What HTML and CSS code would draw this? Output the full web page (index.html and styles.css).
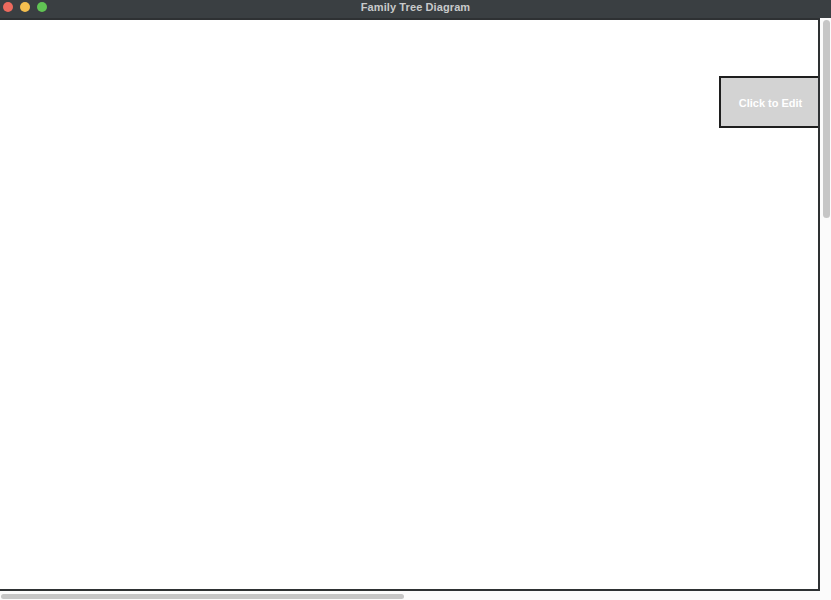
FILE: index.html
```html
<!DOCTYPE html>
<html>
<head>
<meta charset="utf-8">
<title>Family Tree Diagram</title>
<link rel="stylesheet" href="styles.css">
</head>
<body>
<div class="window">
  <div class="titlebar">
    <div class="lights">
      <span class="light red"></span>
      <span class="light yellow"></span>
      <span class="light green"></span>
    </div>
    <div class="title">Family Tree Diagram</div>
  </div>
  <div class="stage">
    <div class="row">
      <div class="canvas">
        <div class="node">Click to Edit</div>
      </div>
      <div class="vscroll"><div class="vthumb"></div></div>
    </div>
    <div class="hscroll"><div class="hthumb"></div></div>
  </div>
</div>
</body>
</html>
```

FILE: styles.css
```css
html, body {
  margin: 0;
  padding: 0;
  background: #ffffff;
  font-family: "Liberation Sans", Arial, sans-serif;
}
.window {
  width: 831px;
  height: 600px;
  display: flex;
  flex-direction: column;
  overflow: hidden;
}
.titlebar {
  height: 18px;
  flex: none;
  background: #3a3f42;
  position: relative;
  display: flex;
  align-items: center;
  justify-content: center;
}
.lights {
  position: absolute;
  left: 3px;
  top: 2px;
  display: flex;
  gap: 7px;
}
.light {
  width: 10px;
  height: 10px;
  border-radius: 50%;
  display: block;
}
.red { background: #ec6a5e; }
.yellow { background: #f4bf4f; }
.green { background: #61c554; }
.title {
  color: #c8cacb;
  font-size: 11px;
  font-weight: bold;
  margin-top: -4px;
  letter-spacing: 0.1px;
}
.stage {
  flex: 1;
  display: flex;
  flex-direction: column;
  background: #ffffff;
}
.row {
  display: flex;
  height: 573px;
  flex: none;
}
.canvas {
  width: 820px;
  height: 573px;
  box-sizing: border-box;
  border-top: 2px solid #2e3133;
  border-right: 2px solid #2e3133;
  border-bottom: 2px solid #2e3133;
  position: relative;
  overflow: hidden;
  background: #ffffff;
}
.node {
  position: absolute;
  left: 719px;
  top: 56px;
  width: 103px;
  height: 52px;
  box-sizing: border-box;
  border: 2px solid #1e1e1e;
  padding-top: 2px;
  background: #d3d3d3;
  color: #ffffff;
  font-size: 11px;
  font-weight: bold;
  display: flex;
  align-items: center;
  justify-content: center;
}
.vscroll {
  width: 11px;
  padding: 2px 1px 0 3px;
  box-sizing: border-box;
  background: #fbfbfb;
}
.vthumb {
  width: 7px;
  height: 198px;
  border-radius: 4px;
  background: #c6c6c6;
}
.hscroll {
  height: 9px;
  padding: 3px 0 0 1px;
  box-sizing: border-box;
  background: #fbfbfb;
}
.hthumb {
  width: 403px;
  height: 5px;
  border-radius: 3px;
  background: #c6c6c6;
}
```
